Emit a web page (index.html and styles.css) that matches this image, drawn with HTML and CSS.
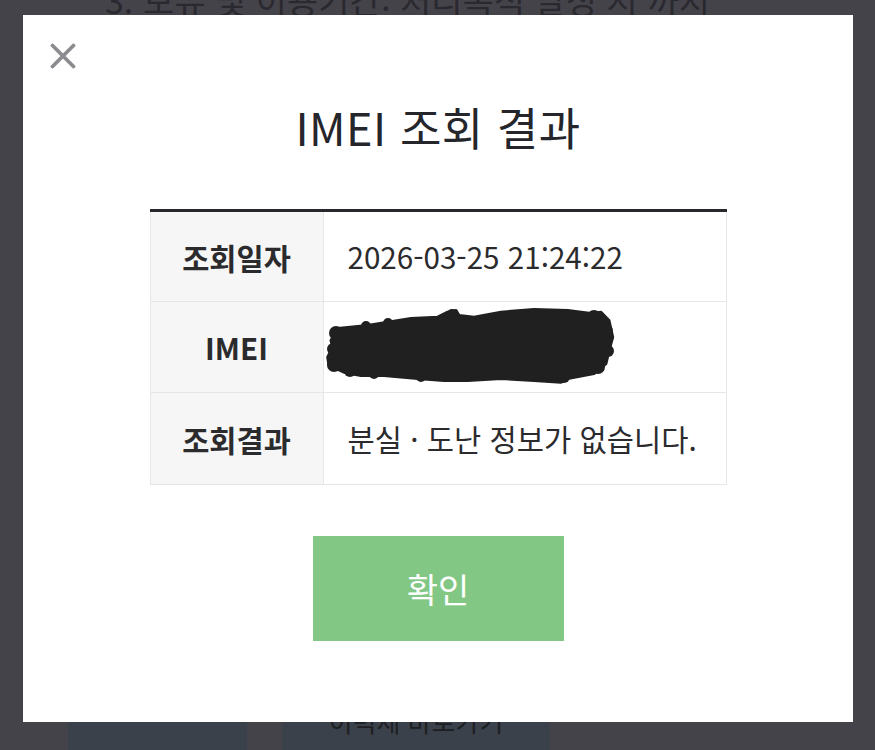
FILE: index.html
```html
<!DOCTYPE html>
<html lang="ko">
<head>
<meta charset="utf-8">
<title>IMEI 조회 결과</title>
<link rel="stylesheet" href="styles.css">
</head>
<body>
<div class="page">
  <p class="bg-line">3. 보유 및 이용기간: 처리목적 달성 시 까지</p>
  <div class="bg-buttons">
    <span class="bg-btn bg-btn-a"></span>
    <span class="bg-btn bg-btn-b">이력제 바로가기</span>
  </div>
</div>

<div class="modal">
  <button class="close" aria-label="닫기">
    <svg width="26" height="26" viewBox="0 0 26 26"><path d="M2.5 2.5 L23.5 23.5 M23.5 2.5 L2.5 23.5" stroke="#8c8c90" stroke-width="3.8" stroke-linecap="round"/></svg>
  </button>
  <h1 class="title">IMEI 조회 결과</h1>
  <table class="result">
    <tr class="r1">
      <th>조회일자</th>
      <td>2026-03-25 21:24:22</td>
    </tr>
    <tr class="r2">
      <th>IMEI</th>
      <td class="imei">
        <svg class="redact" width="290" height="80" viewBox="0 0 290 80">
          <g fill="#1f201f" stroke="#1f201f" stroke-width="3" stroke-linejoin="round">
            <path d="M11.7 21.5 L41.7 18.5 L61.7 15.2 L85 11.5 L111.7 10.2 L121.7 5.2 L130 3.5 L133 8.5 L148 10.2 L175 5.2 L208 2.5 L241.7 3.5 L265 6.5 L275 5.2 L283 13.5 L286.7 30.2 L283 43.5 L280 56.5 L268 66.5 L241.7 71.5 L235 75.2 L208 73.5 L175 71.5 L141.7 73.5 L118 73.5 L91.7 71.5 L58 68.5 L35 68.5 L18 65.2 L3 58.5 L1.7 50.2 L6.7 40.2 L5 33.5 Z"/>
          </g>
          <g fill="#1f201f">
            <circle cx="10" cy="26" r="7"/>
            <circle cx="7" cy="42" r="6"/>
            <circle cx="8" cy="58" r="7"/>
            <circle cx="24" cy="64" r="6"/>
            <circle cx="48" cy="67" r="5"/>
            <circle cx="95" cy="70" r="5"/>
            <circle cx="40" cy="19" r="5"/>
            <circle cx="62" cy="16" r="5"/>
            <circle cx="126" cy="7" r="5"/>
            <circle cx="268" cy="10" r="7"/>
            <circle cx="280" cy="24" r="7"/>
            <circle cx="282" cy="44" r="6"/>
            <circle cx="272" cy="60" r="7"/>
            <circle cx="238" cy="70" r="6"/>
          </g>
        </svg>
      </td>
    </tr>
    <tr class="r3">
      <th>조회결과</th>
      <td>분실 · 도난 정보가 없습니다.</td>
    </tr>
  </table>
  <button class="confirm">확인</button>
</div>
</body>
</html>
```
FILE: styles.css
```css
html, body {
  margin: 0;
  padding: 0;
}
body {
  width: 875px;
  height: 750px;
  overflow: hidden;
  background: #45434a;
  font-family: "Noto Sans CJK KR", "Noto Sans", sans-serif;
  position: relative;
}
.page {
  height: 750px;
  display: flex;
  flex-direction: column;
  justify-content: space-between;
}
.bg-line {
  margin: -20px 0 0 105px;
  font-size: 34px;
  line-height: 40px;
  color: #2a292f;
  white-space: nowrap;
}
.bg-buttons {
  display: flex;
  gap: 35px;
  padding-left: 68px;
  height: 40px;
}
.bg-btn {
  display: block;
  background: #3b414a;
  height: 40px;
}
.bg-btn-a {
  width: 179px;
}
.bg-btn-b {
  width: 268px;
  color: #1d1e22;
  font-size: 26px;
  line-height: 22px;
  text-align: center;
  overflow: hidden;
}
.modal {
  position: absolute;
  left: 23px;
  top: 15px;
  width: 830px;
  height: 707px;
  background: #fff;
  display: flex;
  flex-direction: column;
  align-items: center;
  box-sizing: border-box;
  padding-top: 85px;
}
.close {
  position: absolute;
  left: 27px;
  top: 28px;
  padding: 0;
  margin: 0;
  border: 0;
  background: none;
  width: 26px;
  height: 26px;
}
.close svg {
  display: block;
}
.title {
  margin: 0;
  font-size: 45px;
  line-height: 54px;
  font-weight: 400;
  color: #25262b;
  letter-spacing: 0.5px;
}
.result {
  margin-top: 55px;
  width: 577px;
  border-collapse: collapse;
  border-top: 3px solid #27282b;
}
.result th,
.result td {
  border: 1px solid #e6e6e6;
  padding: 0;
  box-sizing: border-box;
}
.result tr.r1 th,
.result tr.r1 td {
  border-top: 0;
  height: 91px;
}
.result tr.r2 th,
.result tr.r2 td {
  height: 91px;
}
.result tr.r3 th,
.result tr.r3 td {
  height: 92px;
}
.result th {
  width: 173px;
  background: #f6f6f6;
  font-size: 29.5px;
  font-weight: 700;
  color: #2b2b2e;
  text-align: center;
}
.result td {
  padding-left: 24px;
  font-size: 29.6px;
  font-weight: 400;
  color: #2b2b2e;
  text-align: left;
}
.result td.imei {
  padding-left: 2px;
}
.redact {
  display: block;
}
.confirm {
  margin-top: 51px;
  width: 251px;
  height: 105px;
  border: 0;
  background: #83c785;
  color: #fff;
  font-family: inherit;
  font-size: 34px;
  font-weight: 400;
  padding: 0;
}
```
